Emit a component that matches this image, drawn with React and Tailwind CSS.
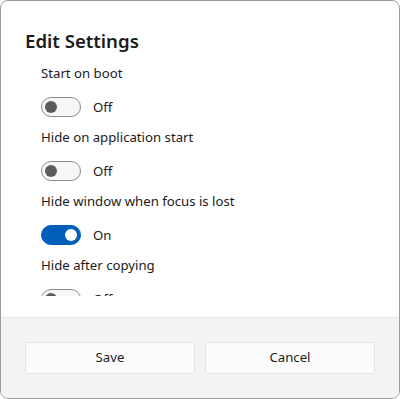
import React, { useState } from "react";

const settings = [
  { label: "Start on boot", on: false },
  { label: "Hide on application start", on: false },
  { label: "Hide window when focus is lost", on: true },
  { label: "Hide after copying", on: false },
  { label: "Show in taskbar", on: true },
];

const Toggle = ({ on, onClick }) => (
  <button
    onClick={onClick}
    className={
      on
        ? "relative w-10 h-5 rounded-full bg-[#005fb8] border border-[#005fb8]"
        : "relative w-10 h-5 rounded-full bg-[#f7f7f7] border border-[#8b8b8b]"
    }
  >
    <span
      className={
        on
          ? "absolute top-[3px] right-[3px] w-3 h-3 rounded-full bg-white"
          : "absolute top-[3px] left-[3px] w-3 h-3 rounded-full bg-[#5c5c5c]"
      }
    />
  </button>
);

const App = () => {
  const [values, setValues] = useState(settings.map((s) => s.on));

  const flip = (i) => setValues((prev) => prev.map((v, j) => (j === i ? !v : v)));

  return (
    <div
      className="w-[400px] h-[399px] bg-white border border-[#9c9c9c] rounded-[8px] overflow-hidden flex flex-col text-[#1b1b1b]"
      style={{ fontFamily: '"Noto Sans", "Open Sans", sans-serif' }}
    >
      <div className="flex-1 min-h-0 flex flex-col pt-[26px] pb-[21px]">
        <h1 className="pl-[24px] text-[18.6px] leading-[28px] font-semibold mb-[8px]">Edit Settings</h1>
        <div className="flex-1 min-h-0 overflow-hidden pl-[40px]">
          {settings.map((s, i) => (
            <div key={s.label}>
              <div className="text-[13.2px] leading-[20px] mb-[14px]">{s.label}</div>
              <div className="flex items-center gap-3 mb-[10px]">
                <Toggle on={values[i]} onClick={() => flip(i)} />
                <span className="text-[13.2px] leading-[20px]">{values[i] ? "On" : "Off"}</span>
              </div>
            </div>
          ))}
        </div>
      </div>
      <div className="h-[81px] bg-[#f3f3f3] border-t border-[#e5e5e5] flex items-center gap-[10px] pl-[24px] pr-[24px]">
        <button className="flex-1 h-8 rounded-[4px] bg-[#fbfbfb] border border-[#e3e3e3] text-[13.2px]">Save</button>
        <button className="flex-1 h-8 rounded-[4px] bg-[#fbfbfb] border border-[#e3e3e3] text-[13.2px]">Cancel</button>
      </div>
    </div>
  );
};

export default App;
